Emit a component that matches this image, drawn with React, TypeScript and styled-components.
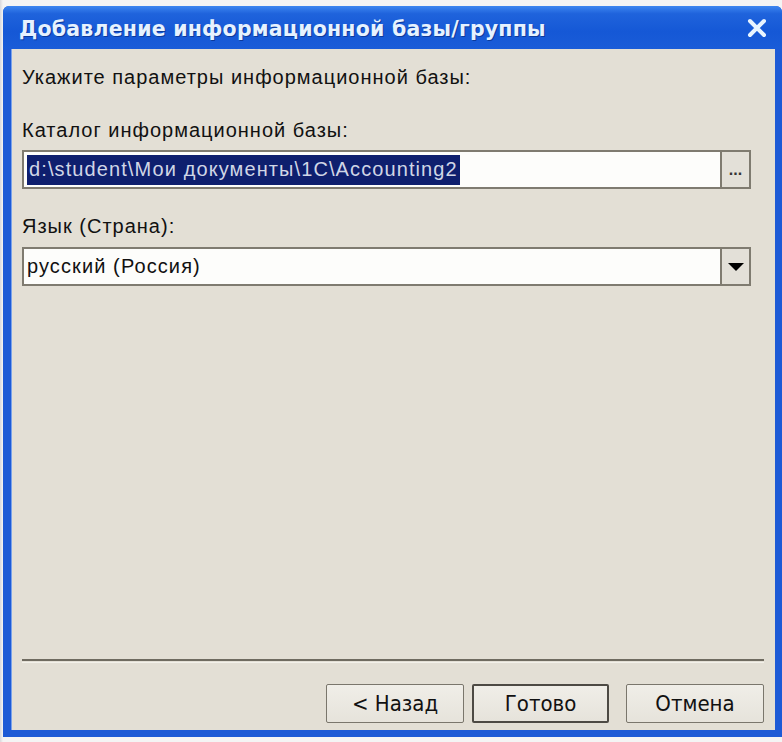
import React from "react";
import styled, { createGlobalStyle } from "styled-components";

const GlobalStyle = createGlobalStyle`
  html, body { margin: 0; padding: 0; background: #f6f6f6; }
  body { font-family: "Liberation Sans", Arial, sans-serif; }
`;

const Page = styled.div`
  width: 782px;
  height: 742px;
  box-sizing: border-box;
  padding: 6px 0 5px 3px;
  display: flex;
  background: linear-gradient(90deg, #d8d8dc 0px, #f4f4f4 3px);
`;

const Window = styled.div`
  flex: 1;
  display: flex;
  flex-direction: column;
  background: #1d5ad6;
  border-radius: 6px 6px 0 0;
  overflow: hidden;
`;

const TitleBar = styled.div`
  height: 43px;
  flex: none;
  display: flex;
  align-items: center;
  justify-content: space-between;
  padding: 0 14px 0 16px;
  background: linear-gradient(180deg, #3d86f0 0%, #1f63dc 18%, #1558d6 60%, #1a5cd8 100%);
`;

const Title = styled.div`
  font-family: "DejaVu Sans", "Liberation Sans", sans-serif;
  font-weight: bold;
  font-size: 20.5px;
  color: #e6f2ff;
  letter-spacing: 0.2px;
  text-shadow: 1px 1px 0 #0b3a9c;
  padding-top: 3px;
`;

const Close = styled.div`
  width: 22px;
  height: 22px;
  display: flex;
  align-items: center;
  justify-content: center;
`;

const Body = styled.div`
  flex: 1;
  display: flex;
  flex-direction: column;
  background: #e3dfd5;
  margin: 0 7px 7px 8px;
  border-left: 1px solid #7aa2ea;
  padding: 0 11px 6px 10px;
`;

const Label = styled.div<{ $top: number }>`
  font-size: 20px;
  line-height: 24px;
  letter-spacing: 1px;
  color: #111;
  margin-top: ${(p) => p.$top}px;
`;

const Field = styled.div<{ $top: number }>`
  display: flex;
  height: 39px;
  width: 729px;
  box-sizing: border-box;
  margin-top: ${(p) => p.$top}px;
  border: 2px solid #7f7b70;
  background: #fdfdfb;
`;

const FieldText = styled.div`
  flex: 1;
  display: flex;
  align-items: center;
  padding-left: 3px;
  font-size: 20px;
  letter-spacing: 1.1px;
  color: #111;
`;

const Selected = styled.span`
  background: #0e1f6e;
  color: #d0d6e6;
  padding: 3px 2px 4px 2px;
`;

const SideButton = styled.div`
  width: 27px;
  flex: none;
  border-left: 2px solid #7f7b70;
  background: #e3e0d8;
  display: flex;
  align-items: center;
  justify-content: center;
  font-size: 16px;
  font-weight: bold;
  color: #333;
`;

const Arrow = styled.div`
  width: 0;
  height: 0;
  border-left: 8px solid transparent;
  border-right: 8px solid transparent;
  border-top: 8px solid #000;
`;

const Spacer = styled.div`
  flex: 1;
`;

const Separator = styled.div`
  height: 1px;
  border-top: 2px solid #6f6b60;
  border-bottom: 1px solid #f3f1ea;
`;

const ButtonRow = styled.div`
  display: flex;
  justify-content: flex-end;
  gap: 8px;
  margin-top: 21px;
  margin-bottom: 1px;
`;

const Btn = styled.div<{ $w: number; $default?: boolean; $gapLeft?: number }>`
  width: ${(p) => p.$w}px;
  height: 39px;
  box-sizing: border-box;
  margin-left: ${(p) => p.$gapLeft ?? 0}px;
  border: ${(p) => (p.$default ? "2px solid #4d4a44" : "1px solid #7a766c")};
  border-radius: 2px;
  background: linear-gradient(180deg, #f0eee8 0%, #e6e3db 100%);
  display: flex;
  align-items: center;
  justify-content: center;
  font-family: "Liberation Sans Narrow", "DejaVu Sans Condensed", "Liberation Sans", sans-serif;
  font-stretch: condensed;
  font-size: 22px;
  color: #111;
`;

export default function App() {
  return (
    <>
      <GlobalStyle />
      <Page>
        <Window>
          <TitleBar>
            <Title>Добавление информационной базы/группы</Title>
            <Close>
              <svg width="20" height="20" viewBox="0 0 20 20">
                <path d="M3 3 L17 17 M17 3 L3 17" stroke="#e8f4ff" strokeWidth="4" strokeLinecap="round" />
              </svg>
            </Close>
          </TitleBar>
          <Body>
            <Label $top={16}>Укажите параметры информационной базы:</Label>
            <Label $top={29}>Каталог информационной базы:</Label>
            <Field $top={8}>
              <FieldText>
                <Selected>d:\student\Мои документы\1С\Accounting2</Selected>
              </FieldText>
              <SideButton>...</SideButton>
            </Field>
            <Label $top={25}>Язык (Страна):</Label>
            <Field $top={9}>
              <FieldText>русский (Россия)</FieldText>
              <SideButton>
                <Arrow />
              </SideButton>
            </Field>
            <Spacer />
            <Separator />
            <ButtonRow>
              <Btn $w={138}>&lt; Назад</Btn>
              <Btn $w={137} $default>Готово</Btn>
              <Btn $w={138} $gapLeft={9}>Отмена</Btn>
            </ButtonRow>
          </Body>
        </Window>
      </Page>
    </>
  );
}
